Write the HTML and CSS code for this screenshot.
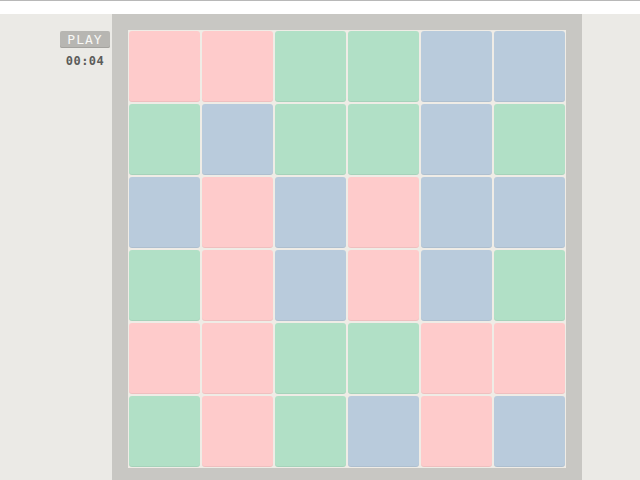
FILE: index.html
```html
<!DOCTYPE html>
<html lang="en">
<head>
    <meta charset="UTF-8">
    <title>Tiles</title>
    <link rel="stylesheet" href="styles.css">
</head>
<body>
    <div class="topbar"></div>
    <div class="main">
        <div class="side">
            <button class="play-btn">PLAY</button>
            <div class="timer">00:04</div>
        </div>
        <div class="board">
            <div class="grid">
                <div class="cell pink"></div><div class="cell pink"></div><div class="cell green"></div><div class="cell green"></div><div class="cell blue"></div><div class="cell blue"></div>
                <div class="cell green"></div><div class="cell blue"></div><div class="cell green"></div><div class="cell green"></div><div class="cell blue"></div><div class="cell green"></div>
                <div class="cell blue"></div><div class="cell pink"></div><div class="cell blue"></div><div class="cell pink"></div><div class="cell blue"></div><div class="cell blue"></div>
                <div class="cell green"></div><div class="cell pink"></div><div class="cell blue"></div><div class="cell pink"></div><div class="cell blue"></div><div class="cell green"></div>
                <div class="cell pink"></div><div class="cell pink"></div><div class="cell green"></div><div class="cell green"></div><div class="cell pink"></div><div class="cell pink"></div>
                <div class="cell green"></div><div class="cell pink"></div><div class="cell green"></div><div class="cell blue"></div><div class="cell pink"></div><div class="cell blue"></div>
            </div>
        </div>
    </div>
</body>
</html>
```

FILE: styles.css
```css
body {
    margin: 0;
    background-color: #ebeae6;
    font-family: "DejaVu Sans Mono", monospace;
    overflow: hidden;
}
.topbar {
    height: 13px;
    background-color: #fff;
    border-top: 1px solid #b8b8b8;
}
.main {
    display: flex;
    align-items: flex-start;
}
.side {
    width: 110px;
    padding-right: 2px;
    padding-top: 17px;
    display: flex;
    flex-direction: column;
    align-items: flex-end;
}
.play-btn {
    width: 50px;
    height: 17px;
    padding: 0;
    border: none;
    border-radius: 2px;
    background-color: #b7b6b2;
    box-shadow: inset 0 -1px 0 #a3a29e;
    color: #f8f8f5;
    font-family: "DejaVu Sans Mono", monospace;
    font-size: 13px;
    letter-spacing: 1px;
    line-height: 17px;
}
.timer {
    width: 50px;
    margin-top: 6px;
    text-align: center;
    color: #5c5c5a;
    font-size: 12px;
    font-weight: bold;
    letter-spacing: 0.5px;
}
.board {
    box-sizing: border-box;
    width: 470px;
    height: 466px;
    padding: 16px 16px 0 16px;
    background-color: #c8c7c3;
}
.grid {
    display: grid;
    grid-template-columns: repeat(6, 71px);
    grid-auto-rows: 71px;
    gap: 2px;
    padding: 1px;
    background-color: #efece6;
}
.cell {
    border-radius: 3px;
    box-shadow: inset 0 -1px 0 rgba(0,0,0,0.06);
}
.pink {
    background-color: #fecbcb;
}
.green {
    background-color: #b1e0c6;
}
.blue {
    background-color: #b9cbdc;
}
```
